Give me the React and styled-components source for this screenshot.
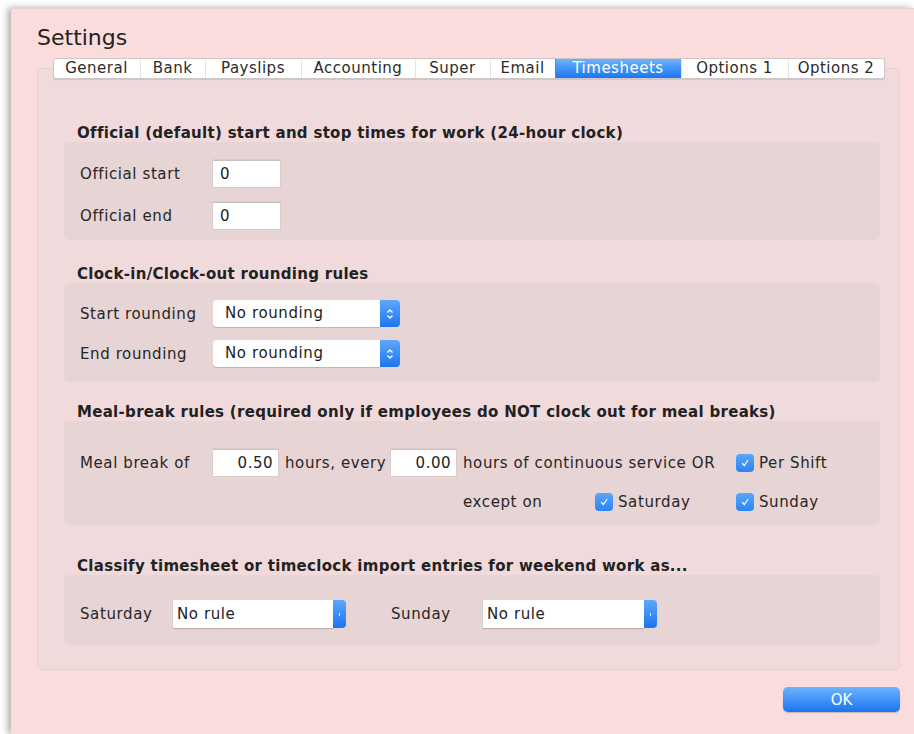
import React from "react";
import styled, { createGlobalStyle } from "styled-components";

const GlobalStyle = createGlobalStyle`
  html, body {
    margin: 0;
    padding: 0;
    background: #fff;
  }
  body {
    width: 914px;
    height: 734px;
    overflow: hidden;
    font-family: "DejaVu Sans", "Liberation Sans", sans-serif;
    color: #262626;
  }
  * {
    box-sizing: border-box;
  }
`;

const Screen = styled.div`
  height: 734px;
  padding: 8px 0 0 11px;
  overflow: hidden;
`;

const Window = styled.div`
  height: 100%;
  background: #fadcdd;
  border-top: 1px solid #ecd0d1;
  box-shadow: -3px 0 7px rgba(0, 0, 0, 0.35);
  padding: 17px 14px 0 26px;
  display: flex;
  flex-direction: column;
`;

const Title = styled.h1`
  margin: 0;
  font-size: 22px;
  line-height: 24px;
  font-weight: normal;
  color: #222;
`;

const TabView = styled.div`
  margin-top: 8px;
  display: flex;
  flex-direction: column;
  align-items: center;
`;

const TabBar = styled.div`
  position: relative;
  z-index: 1;
  display: flex;
  height: 21px;
  background: #fff;
  border: 1px solid #cfc6c6;
  border-radius: 3px;
  overflow: hidden;
  box-shadow: 0 1px 1px rgba(0, 0, 0, 0.12);
`;

const Tab = styled.div`
  width: ${props => props.width}px;
  text-align: center;
  font-size: 15px;
  letter-spacing: 0.5px;
  line-height: 19px;
  white-space: nowrap;
  color: ${props => (props.active ? "#fff" : "#2b2b2b")};
  background: ${props =>
    props.active ? "linear-gradient(#6db2fc, #1b76f2)" : "transparent"};
  &:not(:first-child) {
    border-left: 1px solid ${props => (props.active ? "#3d8af3" : "#e4e4e4")};
  }
`;

const Panel = styled.div`
  align-self: stretch;
  margin-top: -11px;
  background: #f0dadb;
  border: 1px solid #e8d0d1;
  border-radius: 4px;
  padding: 56px 19px 24px 26px;
`;

const Section = styled.section`
  margin-top: ${props => props.top || 0}px;
`;

const Heading = styled.h2`
  margin: 0 0 1px 13px;
  font-size: 15px;
  letter-spacing: 0.3px;
  line-height: 16px;
  font-weight: bold;
  white-space: nowrap;
  color: #222;
`;

const Box = styled.div`
  background: #e7d4d5;
  border-radius: 5px;
  padding: ${props => props.pad};
  display: flex;
  flex-direction: column;
  gap: ${props => props.gap || 0}px;
`;

const Row = styled.div`
  display: flex;
  align-items: center;
  height: ${props => props.h || 27}px;
`;

const Label = styled.span`
  width: ${props => props.width}px;
  margin-left: ${props => props.offset || 0}px;
  font-size: 15px;
  letter-spacing: 0.6px;
  white-space: nowrap;
`;

const Text = styled.span`
  font-size: 15px;
  letter-spacing: 0.6px;
  white-space: nowrap;
`;

const Input = styled.input`
  width: ${props => props.width}px;
  height: 27px;
  border: none;
  outline: none;
  background: #fff;
  box-shadow: inset 0 1px 0 #c9c0c0, 0 0 0 1px rgba(0, 0, 0, 0.04);
  padding: 0 5px 0 7px;
  font-family: inherit;
  font-size: 15px;
  letter-spacing: 0.5px;
  color: #222;
  text-align: ${props => (props.right ? "right" : "left")};
`;

const Popup = styled.div`
  display: flex;
  width: ${props => props.width}px;
  height: ${props => (props.compact ? 28 : 27)}px;
`;

const PopupField = styled.div`
  flex: 1;
  background: #fff;
  border-radius: ${props => (props.compact ? "0" : "4px 0 0 4px")};
  box-shadow: 0 1px 1px rgba(0, 0, 0, 0.18);
  padding-left: ${props => (props.compact ? 4 : 12)}px;
  font-size: 15px;
  letter-spacing: 0.6px;
  white-space: nowrap;
  line-height: ${props => (props.compact ? 28 : 27)}px;
  color: #222;
`;

const PopupArrow = styled.div`
  width: ${props => (props.compact ? 13 : 20)}px;
  background: linear-gradient(#5ea8fb, #1c74f0);
  border-radius: 0 4px 4px 0;
  display: flex;
  align-items: center;
  justify-content: center;
`;

const MealGrid = styled.div`
  display: grid;
  grid-template-columns: 126px 65px 99px 65px 266px auto;
  grid-template-rows: 27px 20px;
  column-gap: 7px;
  row-gap: 16px;
  align-items: center;
`;

const ExceptCell = styled.div`
  display: flex;
  align-items: center;
`;

const Check = styled.label`
  display: flex;
  align-items: center;
  gap: 5px;
  font-size: 15px;
  letter-spacing: 0.6px;
  white-space: nowrap;
`;

const CheckMark = styled.span`
  width: 18px;
  height: 18px;
  border-radius: 4px;
  background: linear-gradient(#5aa6fa, #2b83f3);
  display: flex;
  align-items: center;
  justify-content: center;
`;

const Footer = styled.div`
  align-self: stretch;
  display: flex;
  justify-content: flex-end;
  margin-top: 17px;
`;

const OkButton = styled.button`
  width: 117px;
  height: 25px;
  border: none;
  border-radius: 5px;
  background: linear-gradient(#6db3fd, #1a74f1);
  box-shadow: 0 1px 1px rgba(0, 0, 0, 0.2);
  color: #fff;
  font-family: inherit;
  font-size: 15px;
`;

const tabs = [
  ["General", 86],
  ["Bank", 65],
  ["Payslips", 96],
  ["Accounting", 114],
  ["Super", 75],
  ["Email", 65],
  ["Timesheets", 126],
  ["Options 1", 107],
  ["Options 2", 96]
];

const Select = ({ value, width, compact }) => (
  <Popup width={width} compact={compact}>
    <PopupField compact={compact}>{value}</PopupField>
    <PopupArrow compact={compact}>
      {compact ? (
        <svg width="3" height="5" viewBox="0 0 3 5">
          <rect x="1" y="1" width="1" height="3" fill="#fff" opacity="0.8" />
        </svg>
      ) : (
        <svg width="8" height="12" viewBox="0 0 8 12">
          <path
            d="M1.5 4.5 L4 2 L6.5 4.5 M1.5 7.5 L4 10 L6.5 7.5"
            fill="none"
            stroke="#fff"
            strokeWidth="1.3"
          />
        </svg>
      )}
    </PopupArrow>
  </Popup>
);

const Checkbox = ({ children }) => (
  <Check>
    <CheckMark>
      <svg width="10" height="10" viewBox="0 0 10 10">
        <path
          d="M2.5 5.5 L4.3 7.5 L7.8 2.5"
          fill="none"
          stroke="#fff"
          strokeWidth="1.2"
          strokeLinecap="round"
        />
      </svg>
    </CheckMark>
    {children}
  </Check>
);

const App = () => (
  <Screen>
    <GlobalStyle />
    <Window>
      <Title>Settings</Title>
      <TabView>
        <TabBar>
          {tabs.map(([name, width]) => (
            <Tab key={name} width={width} active={name === "Timesheets"}>
              {name}
            </Tab>
          ))}
        </TabBar>
        <Panel>
          <Section>
            <Heading>
              Official (default) start and stop times for work (24-hour clock)
            </Heading>
            <Box pad="18px 16px 11px" gap={15}>
              <Row>
                <Label width={133}>Official start</Label>
                <Input width={67} defaultValue="0" />
              </Row>
              <Row>
                <Label width={133}>Official end</Label>
                <Input width={67} defaultValue="0" />
              </Row>
            </Box>
          </Section>

          <Section top={26}>
            <Heading>Clock-in/Clock-out rounding rules</Heading>
            <Box pad="17px 16px 15px" gap={13}>
              <Row>
                <Label width={133}>Start rounding</Label>
                <Select value="No rounding" width={187} />
              </Row>
              <Row>
                <Label width={133}>End rounding</Label>
                <Select value="No rounding" width={187} />
              </Row>
            </Box>
          </Section>

          <Section top={22}>
            <Heading>
              Meal-break rules (required only if employees do NOT clock out for
              meal breaks)
            </Heading>
            <Box pad="28px 16px 13px">
              <MealGrid>
                <Text>Meal break of</Text>
                <Input width={65} right defaultValue="0.50" />
                <Text>hours, every</Text>
                <Input width={65} right defaultValue="0.00" />
                <Text>hours of continuous service OR</Text>
                <Checkbox>Per Shift</Checkbox>

                <span />
                <span />
                <span />
                <span />
                <ExceptCell>
                  <Label width={132}>except on</Label>
                  <Checkbox>Saturday</Checkbox>
                </ExceptCell>
                <Checkbox>Sunday</Checkbox>
              </MealGrid>
            </Box>
          </Section>

          <Section top={33}>
            <Heading>
              Classify timesheet or timeclock import entries for weekend work
              as...
            </Heading>
            <Box pad="25px 16px 17px">
              <Row h={28}>
                <Label width={93}>Saturday</Label>
                <Select value="No rule" width={173} compact />
                <Label width={92} offset={45}>
                  Sunday
                </Label>
                <Select value="No rule" width={174} compact />
              </Row>
            </Box>
          </Section>
        </Panel>
        <Footer>
          <OkButton>OK</OkButton>
        </Footer>
      </TabView>
    </Window>
  </Screen>
);

export default App;
